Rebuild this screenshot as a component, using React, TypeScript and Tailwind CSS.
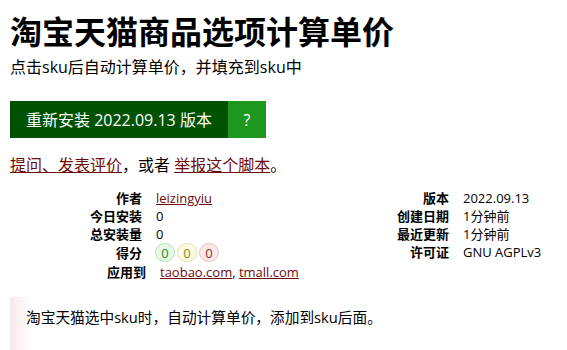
import React from 'react';

const font = { fontFamily: '"Open Sans", "Noto Sans CJK SC", sans-serif' };

const leftRows: [string, React.ReactNode][] = [
  ['作者', <a className="text-[#6e0a0a] underline">leizingyiu</a>],
  ['今日安装', '0'],
  ['总安装量', '0'],
];

const rightRows: [string, string][] = [
  ['版本', '2022.09.13'],
  ['创建日期', '1分钟前'],
  ['最近更新', '1分钟前'],
  ['许可证', 'GNU AGPLv3'],
];

const Rating: React.FC<{ cls: string }> = ({ cls }) => (
  <span className={`inline-flex h-[19px] w-[20px] items-center justify-center rounded-full border text-[13px] ${cls}`}>0</span>
);

export default function App() {
  return (
    <div className="h-[350px] w-[567px] overflow-hidden bg-white text-black" style={font}>
      <div className="px-[10px] pt-[12px]">
        <h2 className="text-[32px] font-bold leading-[40px]">淘宝天猫商品选项计算单价</h2>
        <p className="mt-[3px] text-[16px] leading-[24px]">点击sku后自动计算单价，并填充到sku中</p>

        <div className="mt-[22px] flex h-[37px] w-fit text-[16px] text-white">
          <span className="flex items-center bg-[#005200] pl-[16px] pr-[16px]">重新安装 2022.09.13 版本</span>
          <span className="flex w-[38px] items-center justify-center bg-[#1e971e]">?</span>
        </div>

        <p className="mt-[15px] text-[16px] leading-[24px]">
          <a className="text-[#6e0a0a] underline">提问、发表评价</a>，或者 <a className="text-[#6e0a0a] underline">举报这个脚本</a>。
        </p>

        <div className="mt-[12px] flex text-[13px] leading-[18px]">
          <div className="grid w-[307px] grid-cols-[132px_1fr] gap-x-[14px]">
            {leftRows.map(([k, v]) => (
              <React.Fragment key={k}>
                <span className="text-right font-bold">{k}</span>
                <span>{v}</span>
              </React.Fragment>
            ))}
            <span className="flex h-[19px] items-center justify-end font-bold">得分</span>
            <span className="flex h-[19px] items-center gap-[2px] -ml-[1px]">
              <Rating cls="border-[#b9e3b9] bg-[#e6f7e6] text-[#2e8b2e]" />
              <Rating cls="border-[#e3e3b0] bg-[#fbfbdf] text-[#8a8a1e]" />
              <Rating cls="border-[#e6c3c3] bg-[#fbe9e9] text-[#8b3030]" />
            </span>
          </div>
          <div className="grid grid-cols-[132px_1fr] gap-x-[14px] content-start">
            {rightRows.map(([k, v]) => (
              <React.Fragment key={k}>
                <span className="text-right font-bold">{k}</span>
                <span>{v}</span>
              </React.Fragment>
            ))}
          </div>
        </div>
        <div className="mt-[1px] grid grid-cols-[136px_1fr] gap-x-[14px] text-[13px] leading-[18px]">
          <span className="text-right font-bold">应用到</span>
          <span>
            <a className="text-[#6e0a0a] underline">taobao.com</a>, <a className="text-[#6e0a0a] underline">tmall.com</a>
          </span>
        </div>

        <div className="mt-[16px] h-[60px] bg-[linear-gradient(to_right,#f9e7eb,#ffffff_22px)] pl-[16px] pt-[8px] text-[14.7px] leading-[24px]">
          淘宝天猫选中sku时，自动计算单价，添加到sku后面。
        </div>
      </div>
    </div>
  );
}
